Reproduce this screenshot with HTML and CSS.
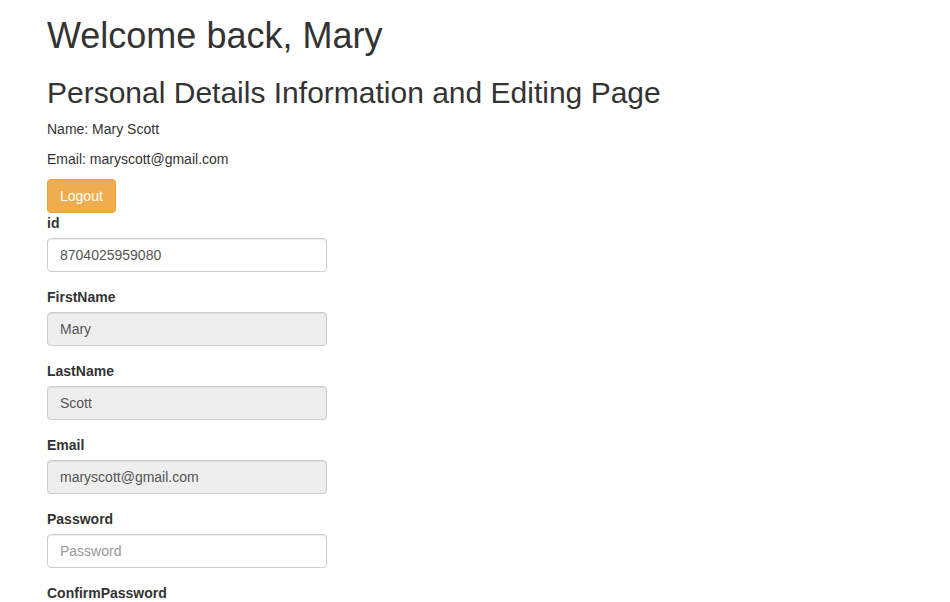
FILE: index.html
```html
<!DOCTYPE html>
<html>
<head>
<meta charset="utf-8">
<link rel="stylesheet" href="styles.css">
</head>
<body>
<div class="page">
  <h1 class="title">Welcome back, Mary</h1>
  <h2 class="subtitle">Personal Details Information and Editing Page</h2>
  <p class="info">Name: Mary Scott</p>
  <p class="info">Email: maryscott@gmail.com</p>
  <button class="btn btn-warning" type="button">Logout</button>
  <form class="details">
    <div class="form-group">
      <label>id</label>
      <input class="form-control" type="text" value="8704025959080">
    </div>
    <div class="form-group">
      <label>FirstName</label>
      <input class="form-control" type="text" value="Mary" disabled>
    </div>
    <div class="form-group">
      <label>LastName</label>
      <input class="form-control" type="text" value="Scott" disabled>
    </div>
    <div class="form-group">
      <label>Email</label>
      <input class="form-control" type="text" value="maryscott@gmail.com" disabled>
    </div>
    <div class="form-group">
      <label>Password</label>
      <input class="form-control" type="password" placeholder="Password">
    </div>
    <div class="form-group">
      <label>ConfirmPassword</label>
      <input class="form-control" type="password" placeholder="Confirm Password">
    </div>
  </form>
</div>
</body>
</html>
```
FILE: styles.css
```css
html, body {
  margin: 0;
  padding: 0;
  background: #fff;
}
body {
  font-family: "Liberation Sans", Arial, sans-serif;
  font-size: 14px;
  line-height: 1.42857143;
  color: #333;
}
.page {
  padding: 0 47px;
}
.title {
  font-size: 36px;
  font-weight: 500;
  line-height: 1.1;
  margin: 16px 0 10px;
}
.subtitle {
  font-size: 30px;
  font-weight: 500;
  line-height: 1.1;
  margin: 20px 0 10px;
}
.info {
  margin: 0 0 10px;
}
.btn {
  display: inline-block;
  font-family: inherit;
  font-size: 14px;
  line-height: 1.42857143;
  padding: 6px 12px;
  border: 1px solid transparent;
  border-radius: 4px;
  cursor: pointer;
  vertical-align: middle;
}
.btn-warning {
  color: #fff;
  background-color: #f0ad4e;
  border-color: #eea236;
}
.details {
  margin: 0;
}
.form-group {
  margin-bottom: 15px;
}
.form-group label {
  display: inline-block;
  max-width: 100%;
  margin-bottom: 5px;
  font-weight: 700;
}
.form-control {
  display: block;
  box-sizing: border-box;
  width: 280px;
  height: 34px;
  padding: 6px 12px;
  font-family: inherit;
  font-size: 14px;
  line-height: 1.42857143;
  color: #555;
  background-color: #fff;
  border: 1px solid #ccc;
  border-radius: 4px;
  box-shadow: inset 0 1px 1px rgba(0,0,0,.075);
  margin: 0;
}
.form-control[disabled] {
  background-color: #eee;
  opacity: 1;
  color: #555;
}
.form-control::placeholder {
  color: #999;
  opacity: 1;
}
```
